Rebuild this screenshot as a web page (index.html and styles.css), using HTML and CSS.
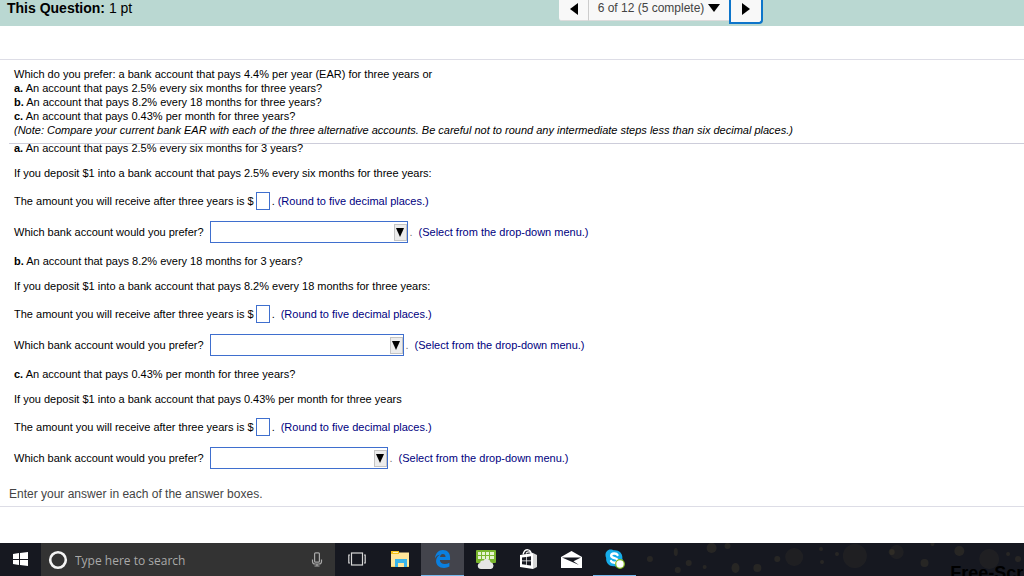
FILE: index.html
```html
<!DOCTYPE html>
<html lang="en">
<head>
<meta charset="utf-8">
<title>Question 6 of 12</title>
<link rel="stylesheet" href="styles.css">
</head>
<body>
<header class="topbar">
  <h1 class="topbar-title">This Question: <span class="points">1 pt</span></h1>
  <nav class="pager" aria-label="Question navigation">
    <button class="pager-btn prev" type="button" aria-label="Previous question"><svg width="8" height="12" viewBox="0 0 8 12"><path d="M8 0v12L0 6z"/></svg></button>
    <button class="pager-btn count" type="button">6 of 12 (5 complete)<svg width="12" height="8" viewBox="0 0 12 8"><path d="M0 0h12L6 8z"/></svg></button>
    <button class="pager-btn next" type="button" aria-label="Next question"><svg width="8" height="12" viewBox="0 0 8 12"><path d="M0 0v12l8-6z"/></svg></button>
  </nav>
</header>

<main class="content">
  <section class="prompt">
    <p>Which do you prefer: a bank account that pays 4.4% per year (EAR) for three years or</p>
    <p><b>a.</b> An account that pays 2.5% every six months for three years?</p>
    <p><b>b.</b> An account that pays 8.2% every 18 months for three years?</p>
    <p><b>c.</b> An account that pays 0.43% per month for three years?</p>
    <p><i>(Note: Compare your current bank EAR with each of the three alternative accounts. Be careful not to round any intermediate steps less than six decimal places.)</i></p>
  </section>

  <form class="parts">
    <section class="part">
      <h2 class="part-title"><b>a.</b> An account that pays 2.5% every six months for 3 years?</h2>
      <p class="row">If you deposit $1 into a bank account that pays 2.5% every six months for three years:</p>
      <div class="row">
        <label for="amount-a">The amount you will receive after three years is $</label><input class="amount" id="amount-a" type="text"><span class="stop near">.</span><span class="hint">(Round to five decimal places.)</span>
      </div>
      <div class="row row-select">
        <label for="pick-a">Which bank account would you prefer?</label>
        <span class="picker picker-a"><select id="pick-a"><option></option></select><span class="arrow"><svg width="8" height="9" viewBox="0 0 8 9"><path d="M0 0h8L4 9z"/></svg></span></span><span class="stop pale">.</span><span class="hint">(Select from the drop-down menu.)</span>
      </div>
    </section>

    <section class="part">
      <h2 class="part-title"><b>b.</b> An account that pays 8.2% every 18 months for 3 years?</h2>
      <p class="row">If you deposit $1 into a bank account that pays 8.2% every 18 months for three years:</p>
      <div class="row">
        <label for="amount-b">The amount you will receive after three years is $</label><input class="amount" id="amount-b" type="text"><span class="stop">.</span><span class="hint">(Round to five decimal places.)</span>
      </div>
      <div class="row row-select">
        <label for="pick-b">Which bank account would you prefer?</label>
        <span class="picker picker-b"><select id="pick-b"><option></option></select><span class="arrow"><svg width="8" height="9" viewBox="0 0 8 9"><path d="M0 0h8L4 9z"/></svg></span></span><span class="stop pale">.</span><span class="hint">(Select from the drop-down menu.)</span>
      </div>
    </section>

    <section class="part">
      <h2 class="part-title"><b>c.</b> An account that pays 0.43% per month for three years?</h2>
      <p class="row">If you deposit $1 into a bank account that pays 0.43% per month for three years</p>
      <div class="row">
        <label for="amount-c">The amount you will receive after three years is $</label><input class="amount" id="amount-c" type="text"><span class="stop">.</span><span class="hint">(Round to five decimal places.)</span>
      </div>
      <div class="row row-select">
        <label for="pick-c">Which bank account would you prefer?</label>
        <span class="picker picker-c"><select id="pick-c"><option></option></select><span class="arrow"><svg width="8" height="9" viewBox="0 0 8 9"><path d="M0 0h8L4 9z"/></svg></span></span><span class="stop pale">.</span><span class="hint">(Select from the drop-down menu.)</span>
      </div>
    </section>
  </form>
  <p class="instruction">Enter your answer in each of the answer boxes.</p>
</main>

<footer class="taskbar">
  <button class="task start" type="button" aria-label="Start">
    <svg width="15" height="14" viewBox="0 0 15 14" fill="#fff"><path d="M0 2l6-1v6H0zM7 1l8-1v7H7zM0 8h6v5l-6-1zM7 8h8v6l-8-1z"/></svg>
  </button>
  <div class="search">
    <svg width="20" height="20" viewBox="0 0 20 20" fill="none" stroke="#f4f4f4" stroke-width="2.6"><circle cx="10" cy="10" r="7.8"/></svg>
    <input type="text" placeholder="Type here to search" aria-label="Type here to search">
    <button class="mic" type="button" aria-label="Voice search"><svg width="12" height="15" viewBox="0 0 12 15" fill="none" stroke="#a8a8a8" stroke-width="1.2"><rect x="3.6" y=".8" width="4.800" height="9.400" rx="1"/><path d="M1.500 7.500v2c0 1.500 1 2.500 2.500 2.500h4c1.500 0 2.500-1 2.500-2.500v-2M6 12v2M3.500 14h5"/></svg></button>
  </div>
  <button class="task" type="button" aria-label="Task view">
    <svg width="18" height="14" viewBox="0 0 18 14" fill="none" stroke="#d8d8d8" stroke-width="1.2"><rect x="3.500" y="1" width="11" height="12"/><path d="M2 3H.8v8H2M16 3h1.200v8H16"/></svg>
  </button>
  <button class="task" type="button" aria-label="File Explorer">
    <svg width="20" height="17" viewBox="0 0 20 17"><path fill="#f5c21b" d="M1 0h8v3H1z"/><path fill="#fff3ba" d="M3 1h5v1H3z"/><path fill="#ffe69b" d="M1 3h8V1.500h10V16H1z"/><path fill="#3ab5e9" d="M5 8h12v8h-3v-4H8v4H5z"/><path fill="#f7cf5e" d="M1 15h4v1H1zM17 15h2v1h-2z"/></svg>
  </button>
  <button class="task open current" type="button" aria-label="Edge">
    <svg width="17" height="18" viewBox="0 0 18 19" fill="#0a7fdf"><path d="M1 9C1.400 3.500 5 0 9.300 0 14.500 0 17 3.500 17 8v2.500H6.200c.2 3 2.400 4.300 5.200 4.300 1.800 0 3.400-.5 4.900-1.300v4C14.700 18.500 12.800 19 10.600 19 5.400 19 2.200 16 2.200 11.600c0-3 1.600-5.400 4.200-6.700C4.100 5 2.100 6.600 1 9zm5.400-1.500h5.800c0-2-1-3.200-2.800-3.200S6.700 5.600 6.400 7.500z"/></svg>
  </button>
  <button class="task" type="button" aria-label="Cloud keyboard">
    <svg width="20" height="20" viewBox="0 0 20 20"><rect y="1" width="20" height="13" rx="1" fill="#79b52d"/><path fill="#e6f3d0" d="M2 3h3v3H2zM6 3h3v3H6zM10 3h3v3h-3zM14 3h4v3h-4zM2 7h3v3H2zM6 7h3v3H6zM10 7h3v3h-3zM14 7h4v3h-4z"/><path fill="#e5e5e5" d="M5 20a3.200 3.200 0 0 1-.8-6.300c.2-1.500 1.500-2.400 3-2a4 4 0 0 1 7.400 1.500A3.500 3.500 0 0 1 15 20z"/></svg>
  </button>
  <button class="task" type="button" aria-label="Store">
    <svg width="19" height="20" viewBox="0 0 19 20"><path fill="none" stroke="#fff" stroke-width="1.3" d="M4 5.500C5 1.500 7 .6 9 .8c2 .2 3 2 3 4.200M7 4.500C8 2.500 11 2 13 4.500"/><path fill="#fff" d="M1 6l13-2v16L1 18z"/><path fill="#d7d7d7" d="M14 4l4 2v12l-4 2z"/><path fill="#161820" d="M3 8.500l4-.5v3.500H3zM7.700 7.900l4.300-.6v4.200H7.700zM3 12.300h4v3.500l-4-.5zM7.700 12.300H12v4.200l-4.300-.6z"/></svg>
  </button>
  <button class="task" type="button" aria-label="Mail">
    <svg width="21" height="17" viewBox="0 0 21 17"><path fill="#fff" d="M0 6l10.500-6L21 6v11H0z"/><path fill="#161820" d="M1 6.500h19l-7.500 3.700L18 14z"/></svg>
  </button>
  <button class="task open" type="button" aria-label="Skype">
    <svg width="20" height="20" viewBox="0 0 20 20"><path fill="#16ace9" d="M5.500.5C7 .5 8 1 8.500 1.300 14 .5 18 4.500 17.300 9.500c2 3.500 0 8.500-4.500 8.500-1.300 0-2.200-.3-3-.8C4 18 .6 13.500 1.200 9-.8 5 1.500.5 5.500.5z"/><path fill="none" stroke="#fff" stroke-width="2.400" stroke-linecap="round" d="M12.500 6C11.500 4 6.200 3.800 6.200 6.800c0 3 6.500 1.700 6.500 4.700 0 3-5.700 2.700-6.700.5"/><circle cx="15" cy="15" r="4.300" fill="#fff" stroke="#82b91e" stroke-width="1.200"/></svg>
  </button>
  <div class="desktop-edge">
    <svg class="lights" viewBox="0 0 390 33" preserveAspectRatio="none" fill="#9a8345"><g opacity=".13"><circle cx="76" cy="5" r="5"/><circle cx="92" cy="3" r="3"/><ellipse cx="40" cy="9" rx="2" ry="4"/><circle cx="14" cy="16" r="3"/><circle cx="53" cy="20" r="3"/><circle cx="42" cy="27" r="3"/><circle cx="69" cy="24" r="2"/><ellipse cx="100" cy="25" rx="4" ry="5"/><circle cx="122" cy="25" r="4"/><circle cx="142" cy="16" r="3"/><circle cx="186" cy="6" r="2"/><circle cx="202" cy="11" r="2"/><circle cx="187" cy="19" r="2"/><circle cx="257" cy="9" r="3"/><circle cx="325" cy="8" r="5"/><circle cx="290" cy="20" r="4"/><circle cx="384" cy="16" r="3"/><circle cx="374" cy="11" r="2"/><circle cx="298" cy="1" r="2"/></g><g opacity=".07"><circle cx="159" cy="14" r="9"/><circle cx="220" cy="13" r="12"/><circle cx="262" cy="9" r="7"/><circle cx="355" cy="16" r="10"/></g></svg>
    <span class="desktop-label">Free-Scr</span>
  </div>
</footer>
</body>
</html>
```
FILE: styles.css
```css
* { box-sizing: border-box; }

body {
  margin: 0;
  min-height: 100vh;
  display: flex;
  flex-direction: column;
  overflow-x: hidden;
  background: #fff;
  color: #000;
  font-family: "Liberation Sans", Arial, sans-serif;
  font-size: 11px;
  line-height: 14px;
}

p, h1, h2 { margin: 0; font-size: inherit; font-weight: normal; }
button { font: inherit; color: inherit; cursor: pointer; }
svg { display: block; flex: none; }

/* Question header */
.topbar {
  display: grid;
  grid-template-columns: 559fr 465fr;
  height: 26px;
  background: #bad8d2;
}
.topbar-title {
  padding-left: 7px;
  font-size: 14px;
  line-height: 16px;
  font-weight: bold;
}
.points { font-weight: normal; }

.pager { display: flex; align-items: flex-start; }
.pager-btn {
  display: flex;
  align-items: center;
  justify-content: center;
  height: 21px;
  padding: 0 0 2px;
  border: 0;
  border-bottom: 1px solid #dcdcdc;
  background: #f8f8f8;
}
.prev { width: 30px; border-right: 1px solid #ccc; border-radius: 0 0 0 3px; }
.count { width: 140px; gap: 4px; padding-bottom: 4px; color: #444; font-size: 12px; }
.count svg { fill: #000; }
.next {
  width: 34px;
  height: 24px;
  padding-bottom: 4px;
  border: 2px solid #0d75ca;
  border-top: 0;
  border-radius: 0 0 4px 0;
}

/* Question text */
.content {
  flex: 1;
  display: flex;
  flex-direction: column;
  margin-top: 33px;
  border-top: 1px solid #dddde6;
}
.prompt {
  margin-left: 9px;
  padding: 7px 5px 6px;
  border-bottom: 1px solid #cdcdda;
}
.parts { padding-left: 14px; }
.part { margin-bottom: 8px; }
.part-title { margin-bottom: 7px; line-height: 8px; }
.row { display: flex; align-items: center; min-height: 28px; }
.row-select { min-height: 34px; }
.row-select label { margin-right: 6px; }

.amount {
  width: 14px;
  height: 18px;
  margin-left: 2px;
  padding: 0;
  border: 1px solid #3f6fce;
  font: inherit;
}
.stop { width: 11px; padding-left: 2px; }
.near { width: 8px; }
.pale { color: #777; }
.hint { color: #000080; }

.picker { display: grid; height: 22px; border: 1px solid #3f6fce; }
.picker select {
  grid-area: 1 / 1;
  width: 100%;
  height: 20px;
  padding: 0 16px 0 4px;
  border: 0;
  background: #fff;
  appearance: none;
  font: inherit;
}
.picker-a { width: 198px; }
.picker-b { width: 194px; }
.picker-c { width: 178px; }
.arrow {
  grid-area: 1 / 1;
  justify-self: end;
  align-self: center;
  z-index: 1;
  display: flex;
  align-items: center;
  justify-content: center;
  width: 13px;
  height: 17px;
  border: 1px solid #c4c4c4;
  background: #ececec;
  pointer-events: none;
}

.instruction {
  padding: 4px 9px 5px;
  border-bottom: 1px solid #dddde6;
  color: #444;
  font-size: 12px;
}

/* Taskbar */
.taskbar {
  display: flex;
  height: 33px;
  overflow: hidden;
  background: #161820;
}
.task {
  display: flex;
  align-items: center;
  justify-content: center;
  width: 43px;
  padding: 0;
  border: 0;
  border-bottom: 1px solid transparent;
  background: transparent;
}
.start { width: 41px; }
.open { border-bottom-color: #76b9ed; }
.current { background: #43444c; }

.search {
  display: flex;
  align-items: center;
  width: 294px;
  padding: 0 12px 0 7px;
  background: #333;
}
.search input {
  flex: 1;
  min-width: 0;
  padding: 2px 7px 0;
  border: 0;
  background: transparent;
  color: #fff;
  font: 12px "Open Sans", "Noto Sans", sans-serif;
}
.search input::placeholder { color: #a9a9a9; opacity: 1; }
.mic { padding: 0; border: 0; background: transparent; }

.desktop-edge { position: relative; flex: 1; overflow: hidden; }
.lights { width: 100%; height: 100%; }
.desktop-label {
  position: absolute;
  left: 81%;
  top: 20px;
  color: #000;
  font: bold 18px/20px "Liberation Sans", Arial, sans-serif;
  white-space: nowrap;
}
```
